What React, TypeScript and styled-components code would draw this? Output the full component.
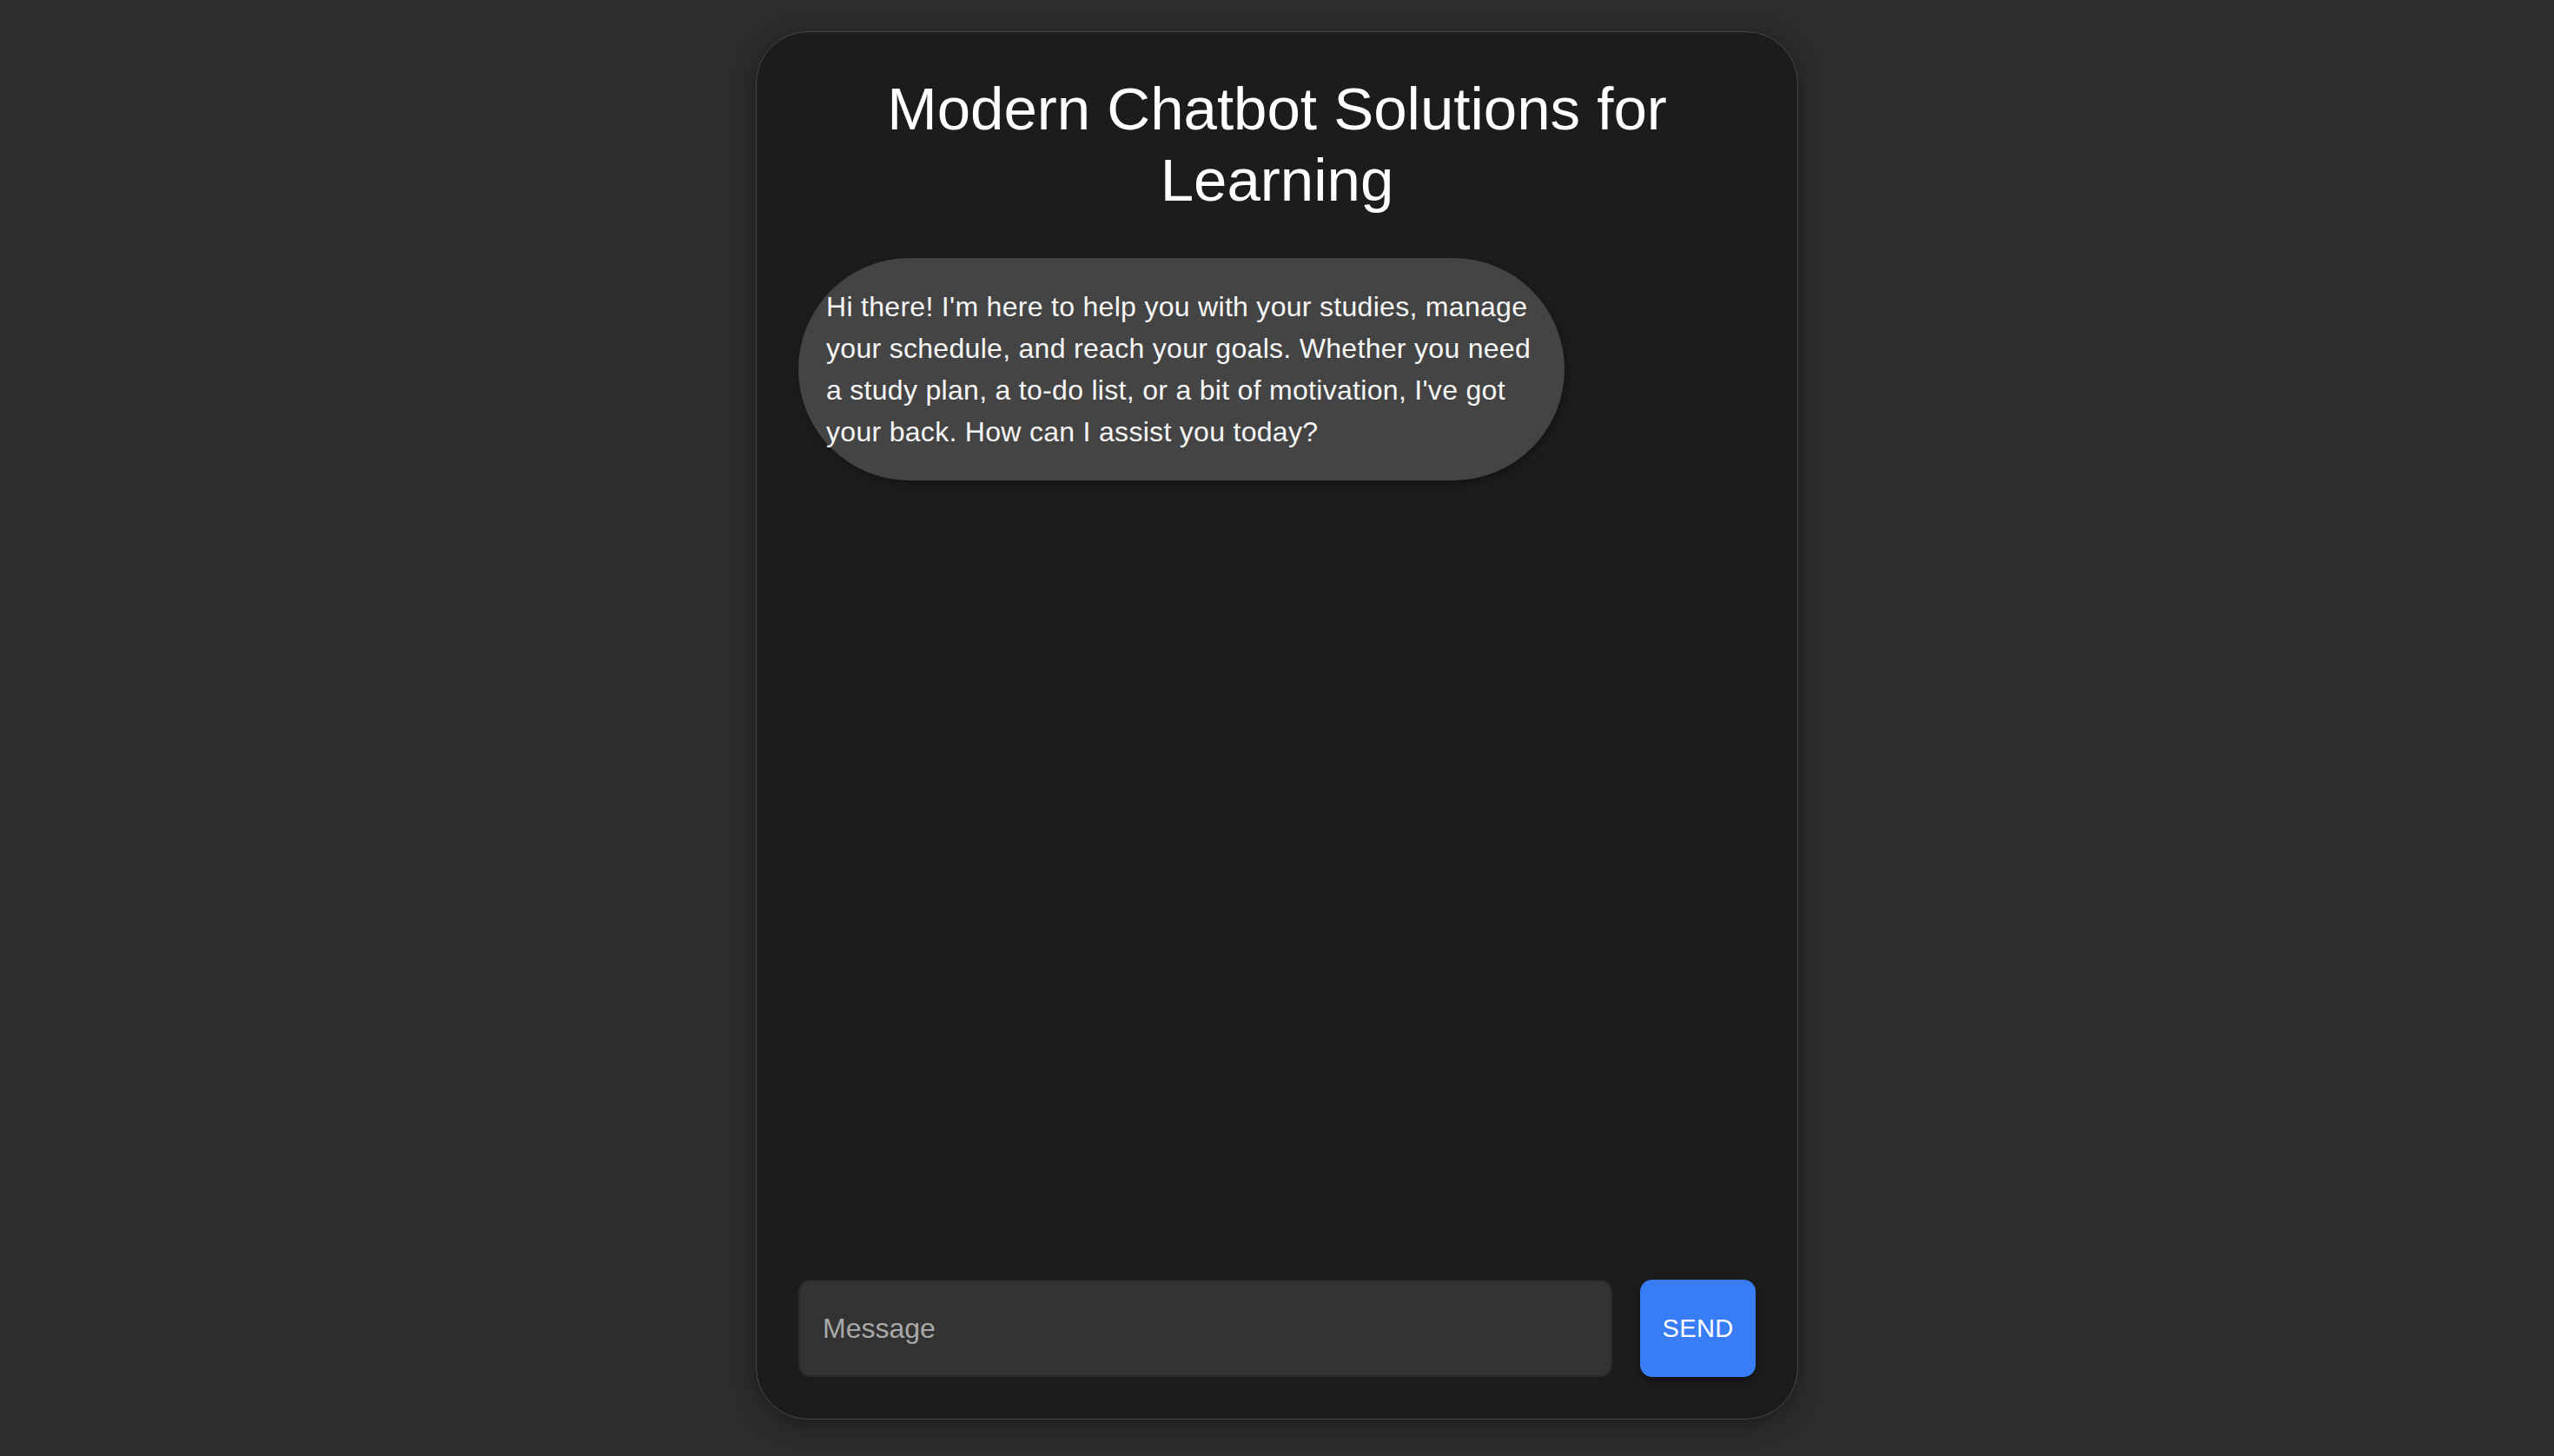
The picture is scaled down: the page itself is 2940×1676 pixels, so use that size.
import React from "react";
import styled, { createGlobalStyle } from "styled-components";

const GlobalStyle = createGlobalStyle`
  html, body {
    margin: 0;
    padding: 0;
    background: #2c2c2c;
    font-family: "Liberation Sans", Arial, Helvetica, sans-serif;
  }
  * { box-sizing: border-box; }
`;

const Page = styled.div`
  display: flex;
  justify-content: center;
  padding-top: 36px;
  min-height: 1676px;
`;

const Card = styled.main`
  width: 1200px;
  height: 1598px;
  display: flex;
  flex-direction: column;
  padding: 48px;
  background: #1c1c1c;
  border: 1px solid #484848;
  border-radius: 60px;
  box-shadow: 0 6px 24px rgba(0, 0, 0, 0.35);
`;

const Title = styled.h1`
  margin: 0;
  font-size: 69px;
  line-height: 82px;
  font-weight: 400;
  color: #ffffff;
  text-align: center;
`;

const Messages = styled.section`
  flex: 1;
  display: flex;
  flex-direction: column;
  align-items: flex-start;
  margin-top: 48px;
`;

const Bubble = styled.div`
  max-width: 80%;
  padding: 32px;
  background: #444444;
  color: #f7f7f7;
  font-size: 32px;
  letter-spacing: 0.3px;
  line-height: 48px;
  border-radius: 9999px;
  box-shadow: 2px 4px 8px rgba(0, 0, 0, 0.3);
`;

const Composer = styled.form`
  display: flex;
  gap: 32px;
  height: 112px;
`;

const MessageInput = styled.input`
  flex: 1;
  height: 100%;
  padding: 0 26px;
  background: #333333;
  border: 2px solid #2a2a2a;
  border-radius: 14px;
  color: #ffffff;
  font-family: "Liberation Sans", Arial, sans-serif;
  font-size: 32px;
  outline: none;
  &::placeholder {
    color: #a9a9a9;
  }
`;

const SendButton = styled.button`
  width: 133px;
  height: 100%;
  border: none;
  border-radius: 14px;
  background: #387df6;
  color: #ffffff;
  font-family: "Liberation Sans", Arial, sans-serif;
  font-size: 29px;
  letter-spacing: 0.3px;
  box-shadow: 0 4px 10px rgba(0, 0, 0, 0.35);
  cursor: pointer;
`;

export default function App() {
  return (
    <>
      <GlobalStyle />
      <Page>
        <Card>
          <Title>Modern Chatbot Solutions for Learning</Title>
          <Messages>
            <Bubble>
              Hi there! I'm here to help you with your studies, manage your schedule, and reach your
              goals. Whether you need a study plan, a to-do list, or a bit of motivation, I've got
              your back. How can I assist you today?
            </Bubble>
          </Messages>
          <Composer onSubmit={(e) => e.preventDefault()}>
            <MessageInput type="text" placeholder="Message" />
            <SendButton type="submit">SEND</SendButton>
          </Composer>
        </Card>
      </Page>
    </>
  );
}
